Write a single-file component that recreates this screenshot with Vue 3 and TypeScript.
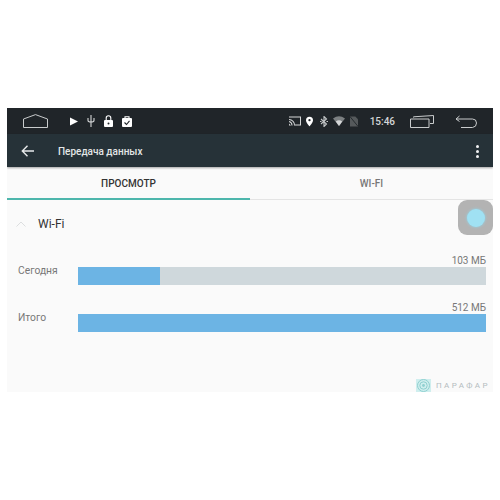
<script setup lang="ts">
interface Usage {
  label: string
  amount: string
  percent: number
}

const rows: Usage[] = [
  { label: 'Сегодня', amount: '103 МБ', percent: 20 },
  { label: 'Итого', amount: '512 МБ', percent: 100 },
]
</script>

<template>
  <div class="page">
    <div class="screen">
      <div class="status-bar">
        <svg class="nav-home" width="25" height="14" viewBox="0 0 25 14">
          <path d="M.5 5 12.500.6 24.500 5V13.500H.5Z" fill="none" stroke="#c9cccd" stroke-width="1" />
        </svg>
        <div class="left-icons">
          <svg width="8" height="9" viewBox="0 0 8 9"><path d="M0 .5 8 4.500 0 8.500Z" fill="#fff" /></svg>
          <svg width="8" height="12" viewBox="0 0 8 12">
            <path d="M4 0V12M1 3V5.500Q1 7 4 7Q7 7 7 5.500V3" fill="none" stroke="#d5d7d8" stroke-width="1.100" />
          </svg>
          <svg width="9" height="12" viewBox="0 0 9 12">
            <path d="M2.200 5V3a2.300 2.300 0 0 1 4.600 0V5" fill="none" stroke="#fff" stroke-width="1.100" />
            <rect x="0" y="5" width="9" height="7" rx="1" fill="#fff" />
            <circle cx="4.500" cy="8.500" r="1" fill="#202529" />
          </svg>
          <svg width="10" height="11" viewBox="0 0 10 11">
            <path d="M3 2.500V.8h4v1.700" fill="none" stroke="#fff" stroke-width="1.100" />
            <rect x="0" y="2" width="10" height="9" rx="1" fill="#fff" />
            <path d="M2.500 6.500 4.500 8.500 7.500 4.800" fill="none" stroke="#202529" stroke-width="1.100" />
          </svg>
        </div>
        <div class="right-icons">
          <svg width="12" height="10" viewBox="0 0 12 10">
            <path d="M0 .5h12v9H6V8.500H11V1.500H0ZM0 3a6 6 0 0 1 6 6.500H5A5 5 0 0 0 0 4ZM0 5a4.500 4.500 0 0 1 3.500 4.500h-1A3.500 3.500 0 0 0 0 6ZM0 7.500 2 9.500H0Z" fill="#d5d7d8" />
          </svg>
          <svg width="7" height="11" viewBox="0 0 8 11">
            <path fill-rule="evenodd" d="M4 0a4 4 0 0 1 4 4C8 6.500 4 11 4 11S0 6.500 0 4a4 4 0 0 1 4-4ZM4 2.700a1.300 1.300 0 1 0 0 2.600 1.300 1.300 0 0 0 0-2.600Z" fill="#fff" />
          </svg>
          <svg class="bt" width="8" height="11" viewBox="0 0 8 11">
            <path d="M1 3 6.500 8 4 10.500V.5L6.500 3 1 8" fill="none" stroke="#c4c7c8" stroke-width="1.100" />
            <path d="M0 5.500H1.500M6.500 5.500H8" stroke="#c4c7c8" stroke-width="1" />
          </svg>
          <svg width="12" height="10" viewBox="0 0 12 10">
            <path d="M0 2.500Q6-2 12 2.500L6 10Z" fill="#7b7f81" />
            <path d="M2.800 5.500Q6 3.200 9.200 5.500L6 10Z" fill="#d5d7d8" />
          </svg>
          <svg class="no-sim" width="8" height="11" viewBox="0 0 9 11">
            <path d="M0 0H6L9 3V11H0Z" fill="#55595b" />
            <path d="M0 0 9 11" stroke="#202529" stroke-width="1" />
          </svg>
        </div>
        <span class="clock">15:46</span>
        <svg class="nav-recent" width="24" height="13" viewBox="0 0 24 13">
          <path d="M.5 4H19V12.500H.5ZM3.500 2.500V1.800L23.500.5V8.500H20" fill="none" stroke="#c9cccd" stroke-width="1" />
        </svg>
        <svg class="nav-back" width="22" height="13" viewBox="0 0 22 13">
          <path d="M4.500 1 1 4 4.500 6.500M1 4H17.500Q21.500 4 21.500 8T17.500 12.500H6" fill="none" stroke="#c9cccd" stroke-width="1" />
        </svg>
      </div>

      <div class="toolbar">
        <svg width="13" height="12" viewBox="0 0 13 12">
          <path d="M6.500 .8 1.300 6 6.500 11.200M1.300 6H13" fill="none" stroke="#e8eaeb" stroke-width="1.400" />
        </svg>
        <span class="title">Передача данных</span>
        <span class="dots"><i></i><i></i><i></i></span>
      </div>

      <div class="tabs">
        <div class="tab active">ПРОСМОТР</div>
        <div class="tab">WI-FI</div>
      </div>

      <div class="content">
        <div class="section-head">
          <svg width="10" height="6" viewBox="0 0 10 6">
            <path d="M.5 5.500 5 1 9.500 5.500" fill="none" stroke="#dcdedf" stroke-width="1" />
          </svg>
          <span>Wi-Fi</span>
        </div>
        <div v-for="row in rows" :key="row.label" class="usage">
          <span class="usage-label">{{ row.label }}</span>
          <div class="usage-main">
            <span class="usage-amount">{{ row.amount }}</span>
            <div class="bar">
              <div class="bar-fill" :style="{ width: row.percent + '%' }"></div>
            </div>
          </div>
        </div>
      </div>

      <div class="float-btn"><i></i></div>

      <div class="watermark">
        <svg width="15" height="13" viewBox="0 0 15 13">
          <rect width="15" height="13" fill="#cfeeee" />
          <circle cx="7.500" cy="6.500" r="6" fill="none" stroke="#8fd0d0" stroke-width="1" />
          <circle cx="7.500" cy="6.500" r="3.700" fill="none" stroke="#8fd0d0" stroke-width="1" />
          <circle cx="7.500" cy="6.500" r="1.400" fill="#8fd0d0" />
        </svg>
        <span>ПАРАФАР</span>
      </div>
    </div>
  </div>
</template>

<style scoped>
.page {
  width: 500px;
  height: 500px;
  padding: 108px 7px 0;
  box-sizing: border-box;
  background: #fff;
  font-family: Roboto, "Liberation Sans", sans-serif;
}

.screen {
  position: relative;
  height: 284px;
  background: #fafafa;
  overflow: hidden;
}

.status-bar {
  display: flex;
  align-items: center;
  height: 26px;
  background: #202529;
  color: #d5d7d8;
  padding-left: 16px;
}

.left-icons {
  display: flex;
  align-items: center;
  gap: 9px;
  margin-left: 22px;
}

.right-icons {
  display: flex;
  align-items: center;
  gap: 5px;
  margin-left: auto;
}

.right-icons .bt {
  margin-left: 2px;
}

.clock {
  font-size: 10px;
  font-weight: 500;
  margin-left: 12px;
}

.nav-recent {
  margin-left: 15px;
}

.nav-back {
  margin: 0 16px 0 21px;
}

.toolbar {
  display: flex;
  align-items: center;
  height: 33px;
  background: #263238;
  color: #e3e6e7;
  padding: 1px 14px 0;
  box-sizing: border-box;
  box-shadow: 0 1px 2px rgba(0, 0, 0, 0.35);
  position: relative;
}

.title {
  font-size: 10px;
  font-weight: 500;
  margin-left: 24px;
}

.dots {
  display: flex;
  flex-direction: column;
  gap: 2px;
  margin-left: auto;
}

.dots i {
  display: block;
  width: 3px;
  height: 3px;
  border-radius: 50%;
  background: #f1f2f3;
}

.tabs {
  display: flex;
  height: 33px;
  border-bottom: 1px solid #e4e4e4;
  box-sizing: border-box;
}

.tab {
  flex: 1;
  display: flex;
  align-items: center;
  justify-content: center;
  padding-top: 1px;
  font-size: 10px;
  font-weight: 500;
  color: #777;
}

.tab.active {
  color: #333;
  border-bottom: 2px solid #4db6ac;
  margin-bottom: -1px;
}

.content {
  padding: 0 7px 0 11px;
}

.section-head {
  display: flex;
  align-items: center;
  height: 48px;
  margin: 0 0 7px -2px;
  color: #333;
}

.section-head svg {
  margin-right: 12px;
}

.section-head span {
  font-size: 12px;
}

.usage {
  display: flex;
  margin-bottom: 17px;
  height: 30px;
}

.usage-label {
  width: 60px;
  font-size: 10.3px;
  color: #777;
  padding-top: 9px;
}

.usage-main {
  flex: 1;
  display: flex;
  flex-direction: column;
}

.usage-amount {
  align-self: flex-end;
  font-size: 10px;
  line-height: 12px;
  color: #777;
}

.bar {
  height: 18px;
  background: #cfd8dc;
}

.bar-fill {
  height: 100%;
  background: #6cb4e4;
}

.float-btn {
  position: absolute;
  top: 92px;
  right: 0;
  width: 35px;
  height: 35px;
  border-radius: 9px;
  background: #b3b3b3;
  display: flex;
  align-items: center;
  justify-content: center;
}

.float-btn i {
  display: block;
  width: 18px;
  height: 18px;
  border-radius: 50%;
  background: #a0e1f3;
  box-shadow: 0 0 3px #8fd8ee;
}

.watermark {
  position: absolute;
  left: 409px;
  bottom: 0;
  display: flex;
  align-items: center;
  gap: 5px;
  font-size: 8px;
  letter-spacing: 2.400px;
  color: #b4bcc0;
  white-space: nowrap;
}

.watermark svg {
  flex: none;
}
</style>
